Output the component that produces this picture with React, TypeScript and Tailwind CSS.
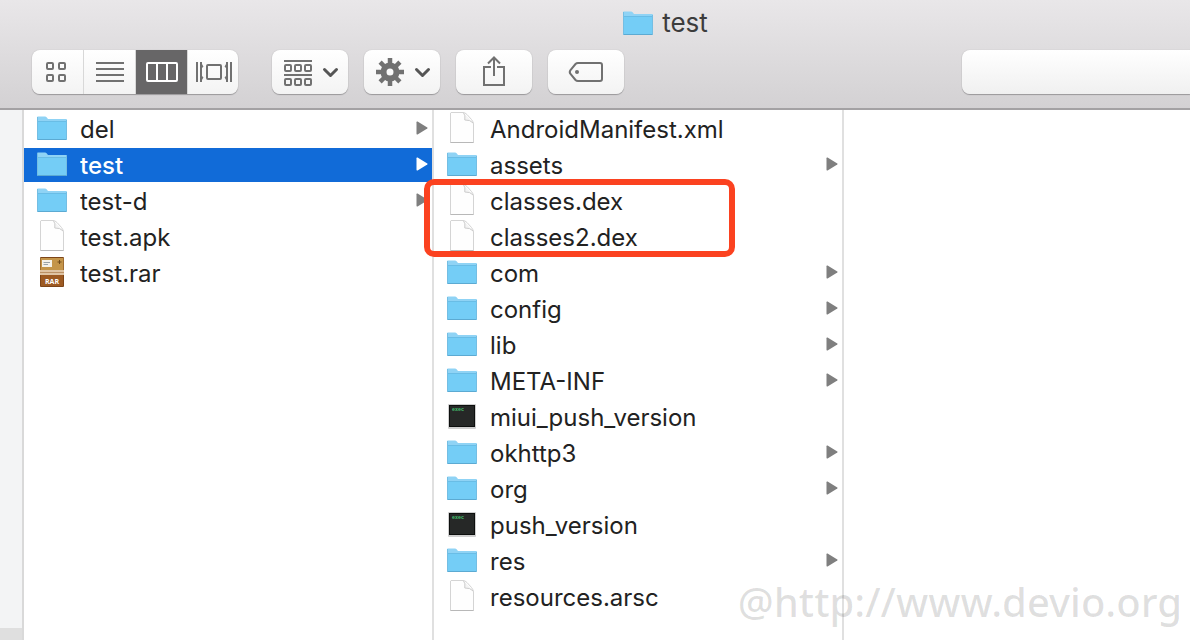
import { useState } from 'react';
import type { ReactNode } from 'react';
import clsx from 'clsx';

type Kind = 'folder' | 'file' | 'rar' | 'exec';

type Entry = {
  name: string;
  kind: Kind;
};

const PARENT: Entry[] = [
  { name: 'del', kind: 'folder' },
  { name: 'test', kind: 'folder' },
  { name: 'test-d', kind: 'folder' },
  { name: 'test.apk', kind: 'file' },
  { name: 'test.rar', kind: 'rar' },
];

const BEFORE: Entry[] = [
  { name: 'AndroidManifest.xml', kind: 'file' },
  { name: 'assets', kind: 'folder' },
];

const MARKED: Entry[] = [
  { name: 'classes.dex', kind: 'file' },
  { name: 'classes2.dex', kind: 'file' },
];

const AFTER: Entry[] = [
  { name: 'com', kind: 'folder' },
  { name: 'config', kind: 'folder' },
  { name: 'lib', kind: 'folder' },
  { name: 'META-INF', kind: 'folder' },
  { name: 'miui_push_version', kind: 'exec' },
  { name: 'okhttp3', kind: 'folder' },
  { name: 'org', kind: 'folder' },
  { name: 'push_version', kind: 'exec' },
  { name: 'res', kind: 'folder' },
  { name: 'resources.arsc', kind: 'file' },
];

function FolderIcon() {
  return (
    <svg className="size-8 shrink-0" viewBox="0 0 32 32" aria-hidden="true">
      <path d="M1 27V5.5Q1 4.5 2 4.5H9Q10 4.5 10.6 5.2L12 7H30Q31 7 31 8V27Z" fill="#8fd3f5" />
      <path d="M1 10H31V27Q31 28 30 28H2Q1 28 1 27Z" fill="#74cdf6" />
      <path d="M1.5 9.5H30.5" stroke="#69bde6" />
      <path d="M1.5 27.5H30.5" stroke="#5caad2" />
      <path d="M1.5 5V27M30.5 8V27" stroke="#74bee3" fill="none" />
    </svg>
  );
}

function FileIcon() {
  return (
    <svg className="size-8 shrink-0" viewBox="0 0 32 32" aria-hidden="true">
      <path d="M5 .5H17Q19 .5 21 2.5L25.5 7.5Q27.5 10 27.5 12V30.5H4.5V1Z" fill="#fefefe" stroke="#d4d4d4" />
      <path d="M4.5 30.5H27.5" stroke="#b8b8b8" />
      <path d="M17.5 .8Q19.5 3 18.8 8Q24 7.6 27.2 11" fill="#f4f4f4" stroke="#cccccc" />
    </svg>
  );
}

function RarIcon() {
  return (
    <svg className="size-8 shrink-0" viewBox="0 0 32 32" aria-hidden="true">
      <rect x="4" y="1" width="24" height="30" rx="1" fill="#7d4518" />
      <rect x="4.5" y="2" width="23" height="12" fill="#c4954a" />
      <rect x="6" y="4" width="10" height="7" fill="#f5f2ea" />
      <path d="M7.5 6.5H14M7.5 8.5H12" stroke="#9aa3a8" />
      <path d="M23.5 4V8M21.5 6H25.5" stroke="#6f4b1c" />
      <rect x="4" y="14" width="24" height="5" fill="#dfc4a4" />
      <path d="M4 16.5H28" stroke="#bb9166" />
      <rect x="5" y="19" width="22" height="11" fill="#9d5a22" />
      <text x="16" y="28" textAnchor="middle" fontFamily="Open Sans, sans-serif" fontSize="7" fontWeight="700" fill="#fff">
        RAR
      </text>
    </svg>
  );
}

function ExecIcon() {
  return (
    <svg className="size-8 shrink-0" viewBox="0 0 32 32" aria-hidden="true">
      <rect x="2" y="4" width="28" height="25" rx="1" fill="#cfcfcf" />
      <rect x="3" y="5" width="26" height="22" fill="#0d0f0e" />
      <rect x="4" y="6" width="24" height="20" fill="#262827" />
      <text x="6" y="11" fontFamily="Liberation Mono, monospace" fontSize="5" fontWeight="700" fill="#45c26e">
        exec
      </text>
    </svg>
  );
}

const ICONS: Record<Kind, () => ReactNode> = {
  folder: FolderIcon,
  file: FileIcon,
  rar: RarIcon,
  exec: ExecIcon,
};

function Row({ entry, selected, onSelect }: { entry: Entry; selected: boolean; onSelect: (name: string) => void }) {
  const Icon = ICONS[entry.kind];

  return (
    <li>
      <button
        type="button"
        onClick={() => onSelect(entry.name)}
        className={clsx(
          'flex h-[34px] w-full items-center gap-3 pb-0.5 pl-3 pr-1 text-left text-2xl leading-8',
          selected ? 'bg-[#116bd8] font-medium text-white' : 'text-[#222]'
        )}
      >
        <Icon />
        <span className="flex-1 truncate pt-1">{entry.name}</span>
        {entry.kind === 'folder' && (
          <svg className="h-3.5 w-3 shrink-0" viewBox="0 0 12 14" aria-hidden="true">
            <path d="M.5 1.2Q.5 0 1.6.6L11.3 6.4Q12 7 11.3 7.6L1.6 13.4Q.5 14 .5 12.8Z" fill={selected ? '#fff' : '#7f7f7f'} />
          </svg>
        )}
      </button>
    </li>
  );
}

const chevron = <path d="M52.5 19.5L58.5 25.5L64.5 19.5" fill="none" stroke="#555" strokeWidth="3" strokeLinecap="round" strokeLinejoin="round" />;

const VIEWS = [
  {
    label: 'Icons',
    icon: (
      <g fill="none" stroke="currentColor" strokeWidth="2">
        <rect x="15" y="13" width="6" height="6" rx="1" />
        <rect x="27" y="13" width="6" height="6" rx="1" />
        <rect x="15" y="25" width="6" height="6" rx="1" />
        <rect x="27" y="25" width="6" height="6" rx="1" />
      </g>
    ),
  },
  {
    label: 'List',
    icon: <path d="M12 13H40M12 19H40M12 25H40M12 31H40" stroke="currentColor" strokeWidth="2" />,
  },
  {
    label: 'Columns',
    icon: (
      <g fill="none" stroke="currentColor" strokeWidth="2">
        <rect x="11" y="13" width="30" height="18" rx="1" />
        <path d="M21 13V31M31 13V31" />
      </g>
    ),
  },
  {
    label: 'Cover Flow',
    icon: (
      <g fill="none" stroke="currentColor">
        <path d="M9 12V32M43 12V32" strokeWidth="2" />
        <path d="M13 12V32M39 12V32" strokeWidth="2" />
        <path d="M13 13L15 17H13ZM13 31L15 27H13ZM39 13L37 17H39ZM39 31L37 27H39Z" fill="currentColor" strokeWidth="1" />
        <rect x="19" y="15" width="14" height="14" rx="1" strokeWidth="2" />
      </g>
    ),
  },
];

const TOOLS = [
  {
    label: 'Arrange',
    icon: (
      <>
        <path d="M12 11H40M12 25H40" stroke="currentColor" strokeWidth="2" />
        <g fill="none" stroke="currentColor" strokeWidth="2">
          <rect x="13" y="15" width="6" height="6" rx="1" />
          <rect x="23" y="15" width="6" height="6" rx="1" />
          <rect x="33" y="15" width="6" height="6" rx="1" />
          <rect x="13" y="29" width="6" height="6" rx="1" />
          <rect x="23" y="29" width="6" height="6" rx="1" />
          <rect x="33" y="29" width="6" height="6" rx="1" />
        </g>
        {chevron}
      </>
    ),
  },
  {
    label: 'Action',
    icon: (
      <>
        <circle cx="26" cy="22" r="6.5" fill="none" stroke="currentColor" strokeWidth="6" />
        <path
          d="M26 8V14M26 30V36M12 22H18M34 22H40M16.1 12.1L20 16M32 28L35.9 31.9M35.9 12.1L32 16M20 28L16.1 31.9"
          stroke="currentColor"
          strokeWidth="4.5"
        />
        {chevron}
      </>
    ),
  },
  {
    label: 'Share',
    icon: (
      <g fill="none" stroke="currentColor" strokeWidth="2">
        <path d="M35 17H28V35H48V17H41" />
        <path d="M38 26V8M32 13.5L38 7.5L44 13.5" />
      </g>
    ),
  },
  {
    label: 'Edit Tags',
    icon: (
      <>
        <path d="M30 13H52Q54 13 54 15V29Q54 31 52 31H30Q28.5 31 27.5 30L22.5 24Q21 22 22.5 20L27.5 14Q28.5 13 30 13Z" fill="none" stroke="currentColor" strokeWidth="2" />
        <circle cx="29" cy="22" r="2" fill="currentColor" />
      </>
    ),
  },
];

export default function App() {
  const [view, setView] = useState('Columns');
  const [folder, setFolder] = useState('test');
  const [file, setFile] = useState('');

  const renderRows = (entries: Entry[]) =>
    entries.map((entry) => <Row key={entry.name} entry={entry} selected={entry.name === file} onSelect={setFile} />);

  return (
    <div className="relative flex min-h-screen flex-col overflow-hidden bg-white font-['Inter',sans-serif]">
      {/* Title and toolbar */}
      <header className="border-b-2 border-[#a3a1a3] bg-linear-to-b from-[#e9e7e9] to-[#d3d1d3] pb-3.5">
        <div className="flex h-[50px] items-start justify-center gap-2 pl-[140px] pt-[7px]">
          <FolderIcon />
          <h1 className="text-[26px] leading-8 text-[#3c3c3c]">test</h1>
        </div>

        <div className="flex pl-8">
          <div className="mr-[34px] flex h-11 overflow-hidden rounded-lg bg-linear-to-b from-white to-[#f3f3f3] shadow-[0_1px_1px_#99979a,0_0_1px_#aaa]">
            {VIEWS.map(({ label, icon }) => (
              <button
                key={label}
                type="button"
                aria-label={label}
                aria-pressed={view === label}
                onClick={() => setView(label)}
                className={clsx(
                  'w-[52px] border-r border-[#d8d8d8] last:w-[50px] last:border-r-0',
                  view === label ? 'bg-[#676667] text-white' : 'text-[#717171]'
                )}
              >
                <svg className="h-11 w-[52px]" viewBox="0 0 52 44" aria-hidden="true">
                  {icon}
                </svg>
              </button>
            ))}
          </div>

          <div className="flex gap-4">
            {TOOLS.map(({ label, icon }) => (
              <button
                key={label}
                type="button"
                aria-label={label}
                className="h-11 w-[76px] rounded-lg bg-linear-to-b from-white to-[#f3f3f3] text-[#717171] shadow-[0_1px_1px_#99979a,0_0_1px_#aaa]"
              >
                <svg className="h-11 w-[76px]" viewBox="0 0 76 44" aria-hidden="true">
                  {icon}
                </svg>
              </button>
            ))}
          </div>

          <input
            type="search"
            aria-label="Search"
            className="ml-auto h-11 w-[228px] rounded-l-lg bg-linear-to-b from-white to-[#f0f0f0] px-4 text-2xl shadow-[0_1px_1px_#99979a,0_0_1px_#aaa] outline-none"
          />
        </div>
      </header>

      <main className="flex flex-1">
        {/* Sidebar edge */}
        <aside className="flex w-6 shrink-0 flex-col border-r-2 border-[#d9d9d9] bg-[#f3f4f5]">
          <div className="mt-auto h-3 bg-[#dfdfdf]" />
        </aside>

        <ul className="flex w-[410px] shrink-0 flex-col gap-0.5 border-r-2 border-[#e0e0e0] pt-0.5">
          {PARENT.map((entry) => (
            <Row key={entry.name} entry={entry} selected={entry.name === folder} onSelect={setFolder} />
          ))}
        </ul>

        <div className="flex w-[410px] shrink-0 flex-col gap-0.5 border-r-2 border-[#e0e0e0] pt-0.5">
          <ul className="flex flex-col gap-0.5">{renderRows(BEFORE)}</ul>
          <div className="relative">
            <ul className="flex flex-col gap-0.5">{renderRows(MARKED)}</ul>
            {/* Red marker around the dex files */}
            <div className="pointer-events-none absolute -bottom-[3px] -left-2.5 -top-[5px] w-[311px] rounded-[10px] border-6 border-[#fb4220]" />
          </div>
          <ul className="flex flex-col gap-0.5">{renderRows(AFTER)}</ul>
        </div>
      </main>

      {/* Watermark */}
      <p className="pointer-events-none absolute bottom-2 right-2 font-['Noto_Sans',sans-serif] text-[40px] font-medium leading-[60px] text-black/13">
        @http://www.devio.org
      </p>
    </div>
  );
}
